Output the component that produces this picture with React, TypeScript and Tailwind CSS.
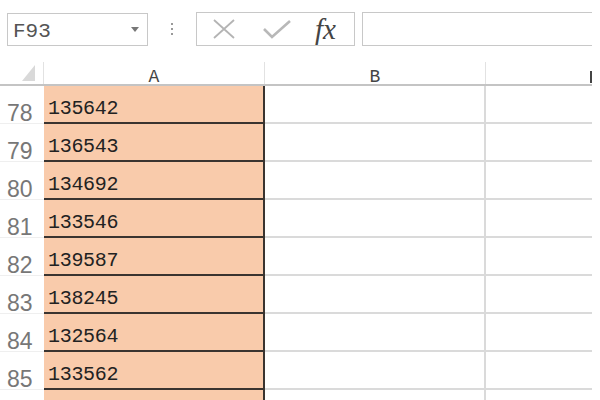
import React from "react";

const rows: [string, string][] = [
  ["78", "135642"],
  ["79", "136543"],
  ["80", "134692"],
  ["81", "133546"],
  ["82", "139587"],
  ["83", "138245"],
  ["84", "132564"],
  ["85", "133562"],
  ["86", "135821"],
];

export default function App() {
  return (
    <div className="w-[600px] h-[400px] bg-white overflow-hidden">
      <div className="w-[592px]">
        {/* toolbar */}
        <div className="h-[62px] flex items-start pt-[12px] pl-[7px]">
          <div className="w-[141px] h-[33px] mt-[1px] border border-[#c8c8c8] flex items-center justify-between pl-[5px] pr-[8px] pt-[3px]">
            <span className="text-[21px] leading-none text-[#555] font-['Liberation_Mono',monospace]">F93</span>
            <svg width="8" height="5" viewBox="0 0 8 5" className="-mt-[3px]">
              <polygon points="0,0 8,0 4,5" fill="#777" />
            </svg>
          </div>
          <div className="w-[48px] h-[34px] flex items-center justify-center">
            <div className="flex flex-col gap-[3px]">
              <div className="w-[2px] h-[2px] bg-[#999]" />
              <div className="w-[2px] h-[2px] bg-[#999]" />
              <div className="w-[2px] h-[2px] bg-[#999]" />
            </div>
          </div>
          <div className="w-[159px] h-[34px] border border-[#c8c8c8] flex items-center">
            <svg width="24" height="20" viewBox="0 0 24 20" className="ml-[15px]">
              <path d="M2 1 L22 19 M22 1 L2 19" stroke="#b4b4b4" strokeWidth="1.8" fill="none" />
            </svg>
            <svg width="28" height="20" viewBox="0 0 28 20" className="ml-[27px]">
              <path d="M1 10 L9 18 L27 2" stroke="#b8b8b8" strokeWidth="2.6" fill="none" />
            </svg>
            <span className="ml-[24px] text-[29px] leading-none italic text-[#444] font-['Liberation_Serif',serif]">
              fx
            </span>
          </div>
          <div className="ml-[7px] flex-1 h-[34px] border border-[#c8c8c8] border-r-0" />
        </div>

        {/* column header */}
        <div className="h-[24px] flex border-b-2 border-[#c4c4c4]">
          <div className="w-[44px] border-r border-[#e2e2e2] flex items-end justify-start pl-[22px] pb-[3px]">
            <svg width="13" height="16" viewBox="0 0 13 16">
              <polygon points="13,0 13,16 0,16" fill="#d9d9d9" />
            </svg>
          </div>
          <div className="w-[221px] border-r border-[#e2e2e2] flex items-start justify-center pt-[6px] text-[18px] leading-none text-[#444] font-['Liberation_Mono',monospace]">
            A
          </div>
          <div className="w-[221px] border-r border-[#e2e2e2] flex items-start justify-center pt-[6px] text-[18px] leading-none text-[#444] font-['Liberation_Mono',monospace]">
            B
          </div>
          <div className="flex-1 flex items-end justify-end pb-[1px]">
            <span className="w-[2px] h-[12px] bg-[#444]" />
          </div>
        </div>

        {/* rows */}
        {rows.map(([n, v]) => (
          <div key={n} className="h-[38px] flex">
            <div className="w-[44px] border-b border-[#efefef] flex items-start pl-[7px] pt-[16px]">
              <span className="text-[23px] leading-none text-[#777] font-['Liberation_Sans',sans-serif]">{n}</span>
            </div>
            <div className="w-[221px] bg-[#f9cbab] border-b-2 border-r-2 border-[#3a3430] flex items-start pl-[4px] pt-[13px]">
              <span className="text-[20px] leading-none tracking-[-0.3px] text-[#222] font-['Liberation_Mono',monospace]">{v}</span>
            </div>
            <div className="w-[221px] border-b-2 border-r-2 border-[#dadada]" />
            <div className="flex-1 border-b-2 border-[#dadada]" />
          </div>
        ))}
      </div>
    </div>
  );
}
